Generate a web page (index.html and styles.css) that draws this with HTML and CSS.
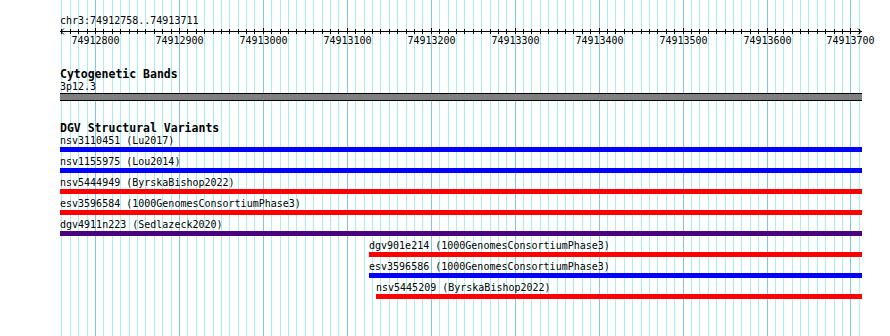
FILE: index.html
```html
<!DOCTYPE html>
<html lang="en">
<head>
    <meta charset="UTF-8">
    <meta name="viewport" content="width=device-width, initial-scale=1.0">
    <title>chr3:74912758..74913711</title>
    <link rel="stylesheet" href="styles.css">
</head>
<body>
    <div class="browser">
        <div class="gridlines" id="gridlines"></div>
        <div class="ruler">
            <div class="location">chr3:74912758..74913711</div>
            <svg class="scale" id="scale" width="890" height="8"></svg>
            <div class="scale-labels" id="scaleLabels"></div>
        </div>
        <section class="track">
            <h2 class="track-label">Cytogenetic Bands</h2>
            <div class="feature-label">3p12.3</div>
            <div class="band"></div>
        </section>
        <section class="track">
            <h2 class="track-label">DGV Structural Variants</h2>
            <div class="rows" id="rows"></div>
        </section>
    </div>
    <script>
        const VIEW_START = 74912758;
        const VIEW_END = 74913711;
        const VIEW_LEFT = 60;
        const VIEW_RIGHT = 862;

        function bpToPx(bp) {
            return 95.5 + (bp - 74912800) * 0.8394;
        }

        const variants = [
            { name: 'nsv3110451', study: 'Lu2017', start: 74910000, end: 74920000, type: 'gain' },
            { name: 'nsv1155975', study: 'Lou2014', start: 74910000, end: 74920000, type: 'gain' },
            { name: 'nsv5444949', study: 'ByrskaBishop2022', start: 74910000, end: 74920000, type: 'loss' },
            { name: 'esv3596584', study: '1000GenomesConsortiumPhase3', start: 74910000, end: 74920000, type: 'loss' },
            { name: 'dgv4911n223', study: 'Sedlazeck2020', start: 74910000, end: 74920000, type: 'both' },
            { name: 'dgv901e214', study: '1000GenomesConsortiumPhase3', start: 74913126, end: 74920000, type: 'loss' },
            { name: 'esv3596586', study: '1000GenomesConsortiumPhase3', start: 74913126, end: 74920000, type: 'gain' },
            { name: 'nsv5445209', study: 'ByrskaBishop2022', start: 74913134, end: 74920000, type: 'loss' }
        ];

        function drawGrid() {
            const grid = document.getElementById('gridlines');
            const scale = document.getElementById('scale');
            const labels = document.getElementById('scaleLabels');
            let svg = `<line x1="${VIEW_LEFT}" y1="4.5" x2="${VIEW_RIGHT}" y2="4.5" />`;
            svg += `<polyline points="${VIEW_LEFT + 4},1.5 ${VIEW_LEFT + 1},4.5 ${VIEW_LEFT + 4},7.5" />`;
            svg += `<polyline points="${VIEW_RIGHT - 4},1.5 ${VIEW_RIGHT - 1},4.5 ${VIEW_RIGHT - 4},7.5" />`;

            for (let bp = Math.ceil(VIEW_START / 10) * 10; bp <= VIEW_END; bp += 10) {
                const x = Math.floor(bpToPx(bp));
                const major = bp % 100 === 0;
                const line = document.createElement('div');
                line.className = major ? 'gridline major' : 'gridline';
                line.style.left = x + 'px';
                grid.appendChild(line);

                svg += `<line x1="${x + 0.5}" y1="${major ? 1 : 2}" x2="${x + 0.5}" y2="7" />`;

                if (major) {
                    const label = document.createElement('span');
                    label.className = 'scale-label';
                    label.style.left = (x + 0.5) + 'px';
                    label.textContent = bp;
                    labels.appendChild(label);
                }
            }
            scale.innerHTML = svg;
        }

        function drawVariants() {
            const rows = document.getElementById('rows');
            variants.forEach(v => {
                const left = Math.max(VIEW_LEFT, Math.round(bpToPx(v.start)));
                const right = Math.min(VIEW_RIGHT, Math.round(bpToPx(v.end)));
                const row = document.createElement('div');
                row.className = 'feature';
                row.style.marginLeft = (left - VIEW_LEFT) + 'px';
                row.innerHTML = `
                    <div class="feature-label">${v.name} (${v.study})</div>
                    <div class="feature-bar ${v.type}" style="width:${right - left}px"></div>
                `;
                rows.appendChild(row);
            });
        }

        drawGrid();
        drawVariants();
    </script>
</body>
</html>
```

FILE: styles.css
```css
body {
    margin: 0;
    padding: 0;
    background-color: #ffffff;
    font-family: "DejaVu Sans Mono", "Liberation Mono", monospace;
    font-size: 10px;
    color: #000000;
}
.browser {
    position: relative;
    width: 890px;
    height: 336px;
    overflow: hidden;
    padding-top: 15px;
    box-sizing: border-box;
}
.gridlines {
    position: absolute;
    top: 0;
    left: 0;
    right: 0;
    bottom: 0;
}
.gridline {
    position: absolute;
    top: 0;
    bottom: 0;
    width: 1px;
    background-color: #a9eef0;
}
.gridline.major {
    background-color: #7fc8ea;
}
.ruler,
.track {
    position: relative;
}
.location {
    padding-left: 60px;
    line-height: 12px;
}
.scale {
    display: block;
}
.scale line,
.scale polyline {
    stroke: #000000;
    stroke-width: 1;
    fill: none;
}
.scale-labels {
    position: relative;
    height: 12px;
}
.scale-label {
    position: absolute;
    top: 0;
    line-height: 12px;
    transform: translateX(-50%);
}
.track {
    padding-left: 60px;
}
.track-label {
    margin: 21px 0 1px 0;
    font-size: 11.5px;
    font-weight: bold;
    line-height: 12px;
}
.feature-label {
    line-height: 12px;
    white-space: nowrap;
}
.band {
    width: 802px;
    height: 6px;
    background-color: #808080;
    border-top: 1px solid #000000;
    border-bottom: 1px solid #000000;
}
.feature {
    margin-bottom: 4px;
}
.feature-bar {
    height: 5px;
}
.feature-bar.gain {
    background-color: #0000ff;
}
.feature-bar.loss {
    background-color: #ff0000;
}
.feature-bar.both {
    background-color: #4b0082;
}
```
